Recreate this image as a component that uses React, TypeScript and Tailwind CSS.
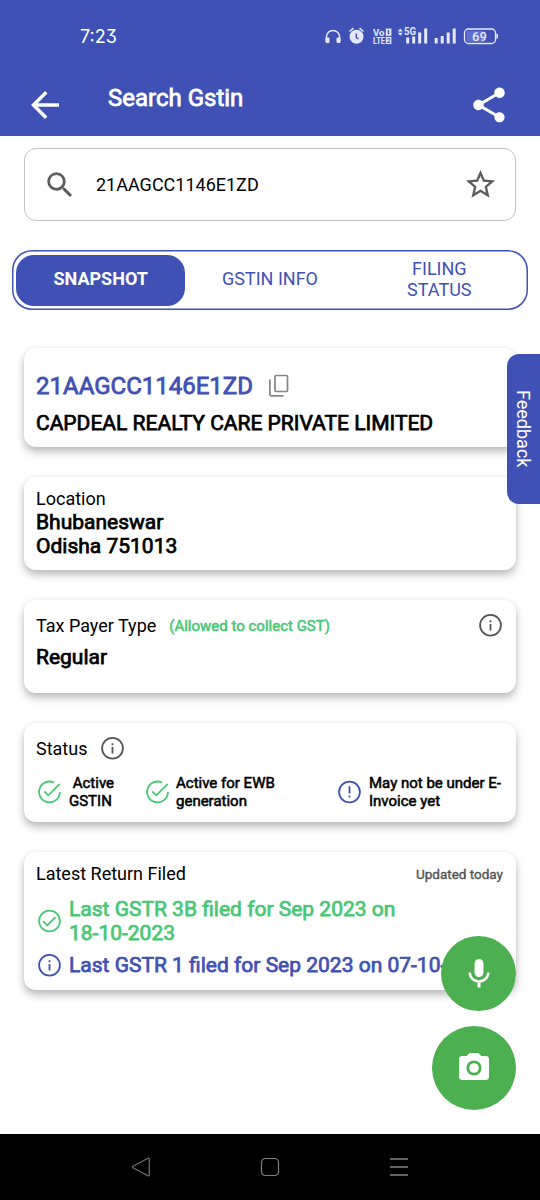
import React from "react";
import {
  MdArrowBack,
  MdShare,
  MdSearch,
  MdStarBorder,
  MdMic,
  MdCameraAlt,
} from "react-icons/md";

const heavy = "[-webkit-text-stroke:0.8px_currentColor]";
const title = "text-[21px] leading-6 [-webkit-text-stroke:0.75px_currentColor]";
const label = "text-[18px] leading-[21px]";
const small = "text-[15px] leading-[18px] [-webkit-text-stroke:0.55px_currentColor]";

function Card({ className, children }: { className: string; children: React.ReactNode }) {
  return (
    <section
      className={
        "rounded-xl bg-white px-3 shadow-[0_5px_8px_rgba(0,0,0,0.26),0_0_5px_rgba(0,0,0,0.06)] " + className
      }
    >
      {children}
    </section>
  );
}

function InfoIcon({ className }: { className: string }) {
  return (
    <svg viewBox="0 0 24 24" className={"size-6 shrink-0 " + className} fill="none" stroke="currentColor" strokeWidth="1.8">
      <circle cx="12.500" cy="12.300" r="10.4" />
      <path d="M12.500 11v6.500M12.500 7.200v2" />
    </svg>
  );
}

function AlertIcon({ className }: { className: string }) {
  return (
    <svg viewBox="0 0 24 24" className={"size-6 shrink-0 " + className} fill="none" stroke="currentColor" strokeWidth="1.8">
      <circle cx="12.500" cy="12" r="10.4" />
      <path d="M12.500 6.300v7.200M12.500 15.500v2" />
    </svg>
  );
}

function OpenCheckIcon({ className }: { className: string }) {
  return (
    <svg viewBox="0 0 24 24" className={"size-6 shrink-0 " + className} fill="none" stroke="currentColor" strokeWidth="1.8">
      <path d="M17 2.600A10.400 10.400 0 1 0 22.900 12" />
      <path d="M7.300 11.300l4 4L22.800 3.800" />
    </svg>
  );
}

function CheckIcon({ className }: { className: string }) {
  return (
    <svg viewBox="0 0 24 24" className={"size-6 shrink-0 " + className} fill="none" stroke="currentColor" strokeWidth="1.8">
      <circle cx="12.500" cy="12" r="10.4" />
      <path d="M6 12.2l4.200 4.200 8.300-8.200" />
    </svg>
  );
}

function StatusIcons() {
  return (
    <svg viewBox="0 0 180 24" className="h-6 w-[180px]" fill="#e6e8fb">
      <path d="M7.4 17.5V13a6.6 6.6 0 0 1 13.2 0v4.500" fill="none" stroke="#e6e8fb" strokeWidth="1.5" />
      <rect x="6.500" y="13.500" width="4" height="5.500" rx="1" />
      <rect x="17.500" y="13.500" width="4" height="5.500" rx="1" />
      <circle cx="37.500" cy="12.800" r="7" />
      <path d="M30.500 7.500l4-3.300M44.500 7.500l-4-3.300" stroke="#e6e8fb" strokeWidth="1.500" />
      <path d="M37.300 9.500v4l2.200 1.300" stroke="#3f51b5" strokeWidth="1.400" fill="none" />
      <text x="54" y="11.500" fontSize="9.400" fontWeight="700" fontFamily="Roboto, sans-serif" textLength="11.500" lengthAdjust="spacingAndGlyphs">Vo</text>
      <rect x="66.800" y="4.600" width="5.600" height="7.200" />
      <rect x="68.800" y="6" width="1.400" height="4.400" fill="#3f51b5" />
      <text x="54" y="19.900" fontSize="9" fontWeight="700" fontFamily="Roboto, sans-serif" textLength="12" lengthAdjust="spacingAndGlyphs">LTE</text>
      <rect x="66.800" y="12.900" width="5.600" height="7.100" />
      <text x="67.700" y="18.800" fontSize="6.500" fontWeight="700" fill="#3f51b5" fontFamily="Roboto, sans-serif">2</text>
      <path d="M78.800 7.400l2.500-3 2.500 3zM78.800 8.800l2.500 3 2.500-3z" />
      <text x="85" y="11.400" fontSize="11" fontWeight="700" fontFamily="Roboto, sans-serif" textLength="12" lengthAdjust="spacingAndGlyphs">5G</text>
      <path d="M87.200 13.500h3v6h-3zM93.200 12.500h3v7h-3zM99.200 8.500h3v11h-3zM105.200 4.500h3v15h-3z" />
      <path d="M115.700 14h3v5.500h-3zM121.700 12h3v7.500h-3zM127.700 8.500h3v11h-3zM133.700 4.500h3v15h-3z" />
      <rect x="145.500" y="5" width="31" height="14.500" rx="4" fill="none" stroke="#e6e8fb" strokeWidth="1.300" />
      <rect x="147.300" y="6.800" width="19" height="11" rx="2.500" fill="#6170d0" />
      <path d="M177.400 9.600h.6q1 .2 1 2.700t-1 2.700h-.6z" />
      <text x="160.500" y="17" textAnchor="middle" fontSize="13" fontWeight="500" fontFamily="Roboto, sans-serif">69</text>
    </svg>
  );
}

export default function App() {
  return (
    <div className="relative flex h-[1200px] w-[540px] flex-col overflow-hidden bg-white font-['Roboto',sans-serif] text-black">
      <header className="h-[136px] bg-[#3f51b5] text-white">
        <div className="flex h-[72px] items-center justify-between pl-20 pr-[41px]">
          <span className="pt-[2px] font-['Inter',sans-serif] text-[18px] leading-6 [font-feature-settings:'cv09']">7:23</span>
          <StatusIcons />
        </div>
        <div className="flex pl-6 pr-[30px]">
          <MdArrowBack className="mt-3 size-[42px]" />
          <h1 className={"ml-[42px] mt-3 text-[24px] leading-7 " + heavy}>Search Gstin</h1>
          <MdShare className="ml-auto mt-3 size-[42px]" />
        </div>
      </header>

      <main className="flex flex-1 flex-col px-6">
        <div className="mt-3 flex h-[73px] shrink-0 items-center rounded-xl border border-[#c4c4c4] pl-[18px] pr-[17px]">
          <MdSearch className="size-[34px] text-[#5c5c5c]" />
          <span className={"-mt-px ml-[19px] " + label}>21AAGCC1146E1ZD</span>
          <MdStarBorder className="ml-auto size-[35px] text-[#5c5c5c]" />
        </div>

        <nav className="-mx-3 mt-[29px] grid h-[60px] shrink-0 grid-cols-3 items-center rounded-[20px] p-1 text-center text-[18px] leading-[21px] text-[#3f51b5] shadow-[inset_0_0_0_1.5px_#3f51b5]">
          <button className="h-[51px] rounded-[18px] bg-[#3f51b5] pb-[3px] font-bold text-white">SNAPSHOT</button>
          <button className="pb-[3px]">GSTIN INFO</button>
          <button className="pb-[3px]">
            FILING
            <br />
            STATUS
          </button>
        </nav>

        <div className="mt-[38px] flex flex-col gap-[30px]">
          <Card className="h-[99px] pt-6">
            <div className="flex items-center">
              <h2 className={"text-[24px] leading-7 text-[#3f51b5] " + heavy}>21AAGCC1146E1ZD</h2>
              <svg viewBox="0 0 22 24" className="ml-[15px] h-6 w-[22px]" fill="none" stroke="#858585" strokeWidth="1.7">
                <rect x="7" y="1.500" width="12.500" height="16" rx="1.200" />
                <path d="M1.900 5.500v15.200q0 1.200 1.200 1.200H15.500" />
              </svg>
            </div>
            <p className={"mt-[11px] " + title}>CAPDEAL REALTY CARE PRIVATE LIMITED</p>
          </Card>

          <Card className="h-[93px] pt-[11px]">
            <p className={label}>Location</p>
            <p className={"mt-px " + title}>
              Bhubaneswar
              <br />
              Odisha 751013
            </p>
          </Card>

          <Card className="h-[93px] pt-[13px]">
            <div className="flex items-center">
              <span className={label}>Tax Payer Type</span>
              <span className={"ml-[13px] pt-[2px] text-[#48c774] " + small}>(Allowed to collect GST)</span>
              <InfoIcon className="ml-auto mr-[2px] text-[#555]" />
            </div>
            <p className={"mt-[8px] " + title}>Regular</p>
          </Card>

          <Card className="h-[99px] pt-[13px]">
            <div className="flex items-center">
              <span className={label}>Status</span>
              <InfoIcon className="ml-[13px] text-[#555]" />
            </div>
            <div className={"mt-[14px] flex items-center " + small}>
              <OpenCheckIcon className="ml-[1px] text-[#48c774]" />
              <p className="ml-2 w-[76px] whitespace-pre">{" Active\nGSTIN"}</p>
              <OpenCheckIcon className="text-[#48c774]" />
              <p className="ml-[7px] w-[161px] whitespace-pre">{"Active for EWB\ngeneration"}</p>
              <AlertIcon className="text-[#3f51b5]" />
              <p className="ml-2 whitespace-pre">{"May not be under E-\nInvoice yet"}</p>
            </div>
          </Card>

          <Card className="h-[138px] pt-[11px]">
            <div className="flex items-center">
              <span className={label}>Latest Return Filed</span>
              <span className="ml-auto mr-[1px] text-[13.5px] leading-4 text-[#555] [-webkit-text-stroke:0.4px_currentColor]">
                Updated today
              </span>
            </div>
            <div className={"mt-[13px] flex items-center text-[#48c774] " + title}>
              <CheckIcon className="ml-[1px]" />
              <p className="ml-2">
                Last GSTR 3B filed for Sep 2023 on
                <br />
                18-10-2023
              </p>
            </div>
            <div className={"mt-2 flex items-center overflow-hidden text-[#3f51b5] " + title}>
              <InfoIcon className="ml-[1px]" />
              <p className="ml-2 whitespace-nowrap">Last GSTR 1 filed for Sep 2023 on 07-10-</p>
            </div>
          </Card>
        </div>
      </main>

      <footer className="flex h-[66px] shrink-0 items-center justify-between bg-black pl-[131px] pr-[131px]">
        <svg viewBox="0 0 20 20" className="size-5" fill="none" stroke="#707070" strokeWidth="1.200">
          <path d="M2 9.300L17 1.300q1.300-.5 1.300 1v15.400q0 1.500-1.300 1L2 10.700q-1-.7 0-1.400z" />
        </svg>
        <svg viewBox="0 0 20 20" className="size-5" fill="none" stroke="#808080" strokeWidth="1.200">
          <rect x="1.500" y="1.500" width="17" height="17" rx="4" />
        </svg>
        <svg viewBox="0 0 20 20" className="size-5" fill="none" stroke="#808080" strokeWidth="1.300">
          <path d="M1 2h18M1 10h18M1 18h18" />
        </svg>
      </footer>

      <button className="absolute right-0 top-[354px] flex h-[150px] w-[33px] items-center justify-center rounded-l-xl bg-[#3f51b5] text-[18px] leading-[21px] text-white [writing-mode:vertical-rl]">
        Feedback
      </button>
      <button className="absolute right-6 top-[936px] flex size-[75px] items-center justify-center rounded-full bg-[#4caf50] text-white">
        <MdMic className="size-9" />
      </button>
      <button className="absolute right-6 top-[1026px] flex size-[84px] items-center justify-center rounded-full bg-[#4caf50] text-white">
        <MdCameraAlt className="size-9" />
      </button>
    </div>
  );
}
